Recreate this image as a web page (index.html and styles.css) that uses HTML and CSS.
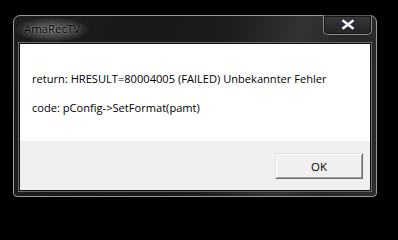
FILE: index.html
```html
<!DOCTYPE html>
<html>
<head>
<meta charset="utf-8">
<title>AmaRecTV</title>
<link rel="stylesheet" href="styles.css">
</head>
<body>
<div class="window">
  <div class="titlebar">
    <div class="title">AmaRecTV</div>
    <div class="close">
      <svg width="14" height="11" viewBox="0 0 14 11">
        <path d="M2.5 2 L11.5 9 M11.5 2 L2.5 9" stroke="#2a2a3a" stroke-width="4.6" stroke-linecap="square" fill="none"/>
        <path d="M2.5 2 L11.5 9 M11.5 2 L2.5 9" stroke="#f4f4f8" stroke-width="2.6" stroke-linecap="square" fill="none"/>
      </svg>
    </div>
  </div>
  <div class="client">
    <div class="client-inner">
      <div class="message">
        <p class="line">return: HRESULT=80004005 (FAILED) Unbekannter Fehler</p>
        <p class="line">code: pConfig-&gt;SetFormat(pamt)</p>
      </div>
      <div class="footer">
        <button class="btn">OK</button>
      </div>
    </div>
  </div>
</div>
</body>
</html>
```

FILE: styles.css
```css
html, body {
  margin: 0;
  padding: 0;
  background: #000;
  width: 398px;
  height: 212px;
  overflow: hidden;
}

.window {
  margin: 15px 0 0 13px;
  width: 364px;
  height: 182px;
  box-sizing: border-box;
  border: 1px solid #9a9a9a;
  border-radius: 7px 7px 4px 4px;
  background: linear-gradient(100deg, #1d1d1d 0%, #181818 35%, #1c1c1c 55%, #333 74%, #262626 86%, #2c2c2c 100%);
  padding: 0 4px 4px 4px;
  display: flex;
  flex-direction: column;
  font-family: "Open Sans", "Noto Sans", sans-serif;
}

.titlebar {
  height: 26px;
  display: flex;
  align-items: flex-start;
}

.title {
  margin: 1px 0 0 -4px;
  padding: 4px 10px 5px 10px;
  font-size: 11.4px;
  line-height: 16px;
  color: #000;
  background: radial-gradient(ellipse closest-side, rgba(170,170,170,0.55) 0%, rgba(150,150,150,0.35) 55%, rgba(120,120,120,0) 100%);
  text-shadow: 0 0 2px rgba(255,255,255,0.5);
}

.close {
  margin-left: auto;
  margin-top: -1px;
  width: 49px;
  height: 20px;
  box-sizing: border-box;
  border: 1px solid #8a8a8a;
  border-top-color: #555;
  border-radius: 0 0 5px 5px;
  box-shadow: inset 0 0 0 1px #141414;
  background: linear-gradient(#3a3a3a, #2a2a2a 60%, #262626);
  display: flex;
  align-items: center;
  justify-content: center;
  padding-bottom: 2px;
}

.close svg {
  display: block;
}

.client {
  flex: 1;
  border: 1px solid #6a6a6a;
  display: flex;
}

.client-inner {
  flex: 1;
  border: 1px solid #0c0c0c;
  display: flex;
  flex-direction: column;
  background: #f0f0f0;
}

.message {
  height: 97px;
  box-sizing: border-box;
  background: #fff;
  padding: 27px 0 0 12px;
}

.line {
  margin: 0 0 13px 0;
  font-size: 11.1px;
  line-height: 16px;
  color: #000;
  white-space: nowrap;
}

.footer {
  flex: 1;
  display: flex;
  justify-content: flex-end;
  align-items: flex-start;
  padding: 12px 7px 0 0;
}

.btn {
  width: 88px;
  height: 26px;
  box-sizing: border-box;
  background: #f0f0f0;
  border: 1px solid;
  border-color: #e3e3e3 #696969 #696969 #e3e3e3;
  box-shadow: inset 1px 1px 0 #fff, inset -1px -1px 0 #a0a0a0;
  font-family: "Open Sans", "Noto Sans", sans-serif;
  font-size: 11.4px;
  color: #000;
  padding: 0;
  border-radius: 0;
}
```
